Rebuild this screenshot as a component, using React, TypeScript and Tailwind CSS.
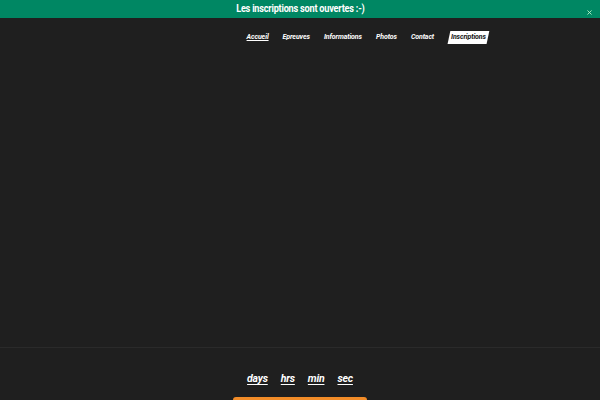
import { X } from 'lucide-react';

const links = ['Accueil', 'Epreuves', 'Informations', 'Photos', 'Contact'];

export default function App() {
  return (
    <div className="h-[400px] overflow-hidden bg-[#1f1f1f] font-['Roboto',sans-serif]">
      <div className="relative flex h-[18px] items-center justify-center bg-[#008763]">
        <span className="text-[11px] font-bold text-white tracking-[-0.25px] scale-x-[0.83] whitespace-nowrap">
          Les inscriptions sont ouvertes :-)
        </span>
        <X size={7} strokeWidth={3} className="absolute right-[7px] top-[9px] text-[#b8f5c8]" />
      </div>

      <nav className="flex h-[38px] items-center justify-end pr-[112px] pt-[1px]">
        <ul className="flex items-center gap-[14px] text-[7px] font-bold italic text-white tracking-[-0.1px]">
          {links.map((l, i) => (
            <li key={l} className={i === 0 ? 'underline underline-offset-1' : ''}>
              {l}
            </li>
          ))}
          <li className="ml-[1px] -skew-x-12 bg-white px-[2px] py-[1px] text-[#111]">
            <span className="inline-block skew-x-12">Inscriptions</span>
          </li>
        </ul>
      </nav>

      <div className="h-[291px]" />
      <div className="border-t border-[#2a2a2a]" />

      <div className="flex flex-col items-center pt-[23px]">
        <div className="flex gap-[13px] text-[10.5px] font-bold italic text-white underline underline-offset-2 tracking-[-0.2px]">
          <span>days</span>
          <span>hrs</span>
          <span>min</span>
          <span>sec</span>
        </div>
        <div className="mt-[10px] h-[10px] w-[134px] rounded-t-[3px] bg-[#f28c28]" />
      </div>
    </div>
  );
}
